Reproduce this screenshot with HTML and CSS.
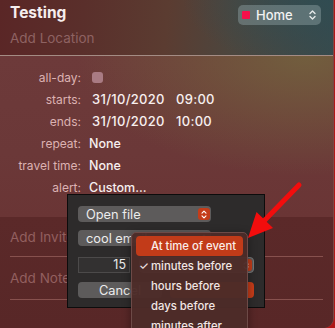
FILE: index.html
```html
<!DOCTYPE html>
<html>
<head>
<meta charset="utf-8">
<link rel="stylesheet" href="styles.css">
</head>
<body>
<div class="window">
  <header class="head">
    <div class="title-col">
      <div class="title">Testing</div>
      <div class="loc">Add Location</div>
    </div>
    <div class="cal-pop">
      <span class="dot"></span>
      <span class="cal-name">Home</span>
      <svg class="updown" width="7" height="12" viewBox="0 0 7 12"><path d="M1 4.5 L3.5 2 L6 4.5 M1 7.5 L3.5 10 L6 7.5" fill="none" stroke="#e6eaea" stroke-width="1.4" stroke-linecap="round" stroke-linejoin="round"/></svg>
    </div>
  </header>

  <section class="details">
    <div class="row"><span class="lbl">all-day:</span><span class="val inset"><span class="check"></span></span></div>
    <div class="row"><span class="lbl">starts:</span><span class="val inset dt"><span class="date">31/10/2020</span><span class="time">09:00</span></span></div>
    <div class="row"><span class="lbl">ends:</span><span class="val inset dt"><span class="date">31/10/2020</span><span class="time">10:00</span></span></div>
    <div class="row"><span class="lbl">repeat:</span><span class="val">None</span></div>
    <div class="row"><span class="lbl">travel time:</span><span class="val">None</span></div>
    <div class="row"><span class="lbl">alert:</span><span class="val">Custom...</span></div>
  </section>

  <section class="extras">
    <div class="extra first">Add Invitees</div>
    <div class="extra second">Add Notes</div>
  </section>

  <div class="dialog">
    <div class="popup wide"><span class="ptext">Open file</span><span class="stepper"><svg width="6" height="9" viewBox="0 0 6 9"><path d="M1 3.2 L3 1.2 L5 3.2 M1 5.8 L3 7.8 L5 5.8" fill="none" stroke="#fff" stroke-width="1.1" stroke-linecap="round" stroke-linejoin="round"/></svg></span></div>
    <div class="popup wide"><span class="ptext">cool email</span><span class="stepper"><svg width="6" height="9" viewBox="0 0 6 9"><path d="M1 3.2 L3 1.2 L5 3.2 M1 5.8 L3 7.8 L5 5.8" fill="none" stroke="#fff" stroke-width="1.1" stroke-linecap="round" stroke-linejoin="round"/></svg></span></div>
    <div class="field-row">
      <div class="field">15</div>
      <div class="popup unit"><span class="ptext"></span><span class="stepper"><svg width="6" height="9" viewBox="0 0 6 9"><path d="M1 3.2 L3 1.2 L5 3.2 M1 5.8 L3 7.8 L5 5.8" fill="none" stroke="#fff" stroke-width="1.1" stroke-linecap="round" stroke-linejoin="round"/></svg></span></div>
    </div>
    <div class="btn-row">
      <div class="btn">Cancel</div>
      <div class="btn ok"></div>
    </div>
  </div>

  <div class="menu">
    <div class="item hl">At time of event</div>
    <div class="item"><span class="tick">✓</span>minutes before</div>
    <div class="item">hours before</div>
    <div class="item">days before</div>
    <div class="item">minutes after</div>
  </div>

  <svg class="arrow" width="335" height="328" viewBox="0 0 335 328">
    <line x1="299" y1="185" x2="262" y2="223" stroke="#f20d0d" stroke-width="5" stroke-linecap="round"/>
    <polygon points="248,238 256.5,212 273,228" fill="#f20d0d"/>
  </svg>
</div>
</body>
</html>
```

FILE: styles.css
```css
html, body {
  margin: 0;
  padding: 0;
  width: 335px;
  height: 328px;
  overflow: hidden;
  background: #b01818;
}

.window {
  position: relative;
  width: 333px;
  height: 328px;
  overflow: hidden;
  border-bottom-right-radius: 10px;
  border-right: 1px solid rgba(255, 220, 210, 0.18);
  font-family: "Inter", "Liberation Sans", sans-serif;
  display: flex;
  flex-direction: column;
  background: #5a2828;
}

/* header */
.head {
  height: 55px;
  border-bottom: 1px solid #a48c84;
  display: flex;
  justify-content: space-between;
  align-items: flex-start;
  padding: 0 10px 0 10px;
  background:
    radial-gradient(ellipse 150px 70px at 100% 0%, rgba(48, 76, 82, 0.95), rgba(48, 76, 82, 0) 100%),
    linear-gradient(95deg, #5a2626 0%, #5a2f2b 25%, #5b3c31 50%, #4c463e 70%, #384a4c 100%);
  flex: none;
}

.title-col {
  display: flex;
  flex-direction: column;
}

.title {
  color: #f6eeee;
  font-weight: 700;
  font-size: 15.5px;
  line-height: 19px;
  margin-top: 3px;
}

.loc {
  color: #8e6262;
  font-size: 13.5px;
  line-height: 17px;
  margin-top: 8px;
}

.cal-pop {
  margin-top: 5px;
  margin-right: 2px;
  width: 83px;
  height: 20px;
  box-sizing: border-box;
  border-radius: 5px;
  background: rgba(150, 170, 172, 0.42);
  display: flex;
  align-items: center;
  padding: 0 5px 0 4px;
}

.dot {
  width: 8px;
  height: 8px;
  background: #f5104a;
  border-radius: 1px;
  flex: none;
}

.cal-name {
  color: #f2f2f2;
  font-size: 13px;
  font-weight: 500;
  margin-left: 6px;
  flex: 1;
}

.updown {
  flex: none;
}

/* details */
.details {
  padding: 10px 0 19px 0;
  background:
    radial-gradient(ellipse 230px 120px at 92% 0%, rgba(114, 96, 62, 0.95), rgba(114, 96, 62, 0) 100%),
    linear-gradient(180deg, #6d3a3a 0%, #6b3838 60%, #6a3535 100%);
  flex: none;
}

.row {
  display: grid;
  grid-template-columns: 81px 1fr;
  column-gap: 8px;
  height: 22px;
  align-items: center;
}

.lbl {
  text-align: right;
  color: #dcb2b2;
  font-size: 12px;
}

.val {
  color: #f7efef;
  font-size: 12.5px;
  font-weight: 500;
  display: flex;
  align-items: center;
}

.val.inset {
  padding-left: 3px;
}

.val.dt {
  display: grid;
  grid-template-columns: 84px auto;
  justify-content: start;
}

.date,
.time {
  font-size: 13px;
  letter-spacing: 0.3px;
}

.check {
  width: 11px;
  height: 11px;
  border-radius: 3px;
  background: #a97b83;
}

/* extras */
.extras {
  flex: 1;
  background: linear-gradient(180deg, #5b2929 0%, #582727 100%);
}

.extra {
  margin: 0 10px 0 10px;
  color: #925f5f;
  font-size: 13.5px;
  display: flex;
  align-items: center;
  border-bottom: 1px solid rgba(190, 130, 125, 0.45);
}

.extra.first {
  height: 39px;
}

.extra.second {
  height: 42px;
}

/* dialog */
.dialog {
  position: absolute;
  left: 67px;
  top: 194px;
  width: 198px;
  height: 114px;
  box-sizing: border-box;
  background: #2d2b2b;
  border: 1px solid #0c0c0c;
  padding: 11px 10px 0 10px;
  display: flex;
  flex-direction: column;
  gap: 8px;
}

.popup {
  height: 16px;
  box-sizing: border-box;
  border-radius: 4px;
  background: #5d5b5b;
  display: flex;
  align-items: center;
  justify-content: space-between;
  padding: 0 1px 0 8px;
  color: #ececec;
  font-size: 12.8px;
}

.popup.wide {
  width: 133px;
}

.stepper {
  width: 12px;
  height: 12px;
  border-radius: 3px;
  background: #c43c19;
  display: flex;
  align-items: center;
  justify-content: center;
}

.field-row {
  display: flex;
  gap: 9px;
  margin-top: 3px;
  height: 16px;
}

.field {
  width: 52px;
  height: 16px;
  box-sizing: border-box;
  border: 1px solid #4c4a4a;
  background: #333131;
  color: #ececec;
  font-size: 12.5px;
  text-align: right;
  padding-right: 3px;
  line-height: 14px;
}

.popup.unit {
  flex: 1;
  border: 1px solid #777;
}

.btn-row {
  display: flex;
  gap: 8px;
  margin-top: 1px;
}

.btn {
  flex: 1;
  height: 16px;
  border-radius: 4px;
  background: #5d5b5b;
  color: #ececec;
  font-size: 12.8px;
  display: flex;
  align-items: center;
  justify-content: center;
}

.btn.ok {
  background: #c43c19;
}

/* menu */
.menu {
  position: absolute;
  left: 131px;
  top: 232px;
  width: 117px;
  height: 120px;
  box-sizing: border-box;
  background: rgba(76, 43, 40, 0.97);
  border: 1px solid #6d4a47;
  border-radius: 5px;
  padding: 3px 4px;
  box-shadow: 0 2px 8px rgba(0, 0, 0, 0.4);
}

.item {
  position: relative;
  height: 20px;
  border-radius: 4px;
  padding-left: 15px;
  color: #f1e6e4;
  font-size: 11.3px;
  font-weight: 500;
  display: flex;
  align-items: center;
}

.item.hl {
  background: #c23b19;
  color: #fbeee8;
}

.tick {
  position: absolute;
  left: 3px;
  font-size: 11px;
}

.arrow {
  position: absolute;
  left: 0;
  top: 0;
  pointer-events: none;
}
```
